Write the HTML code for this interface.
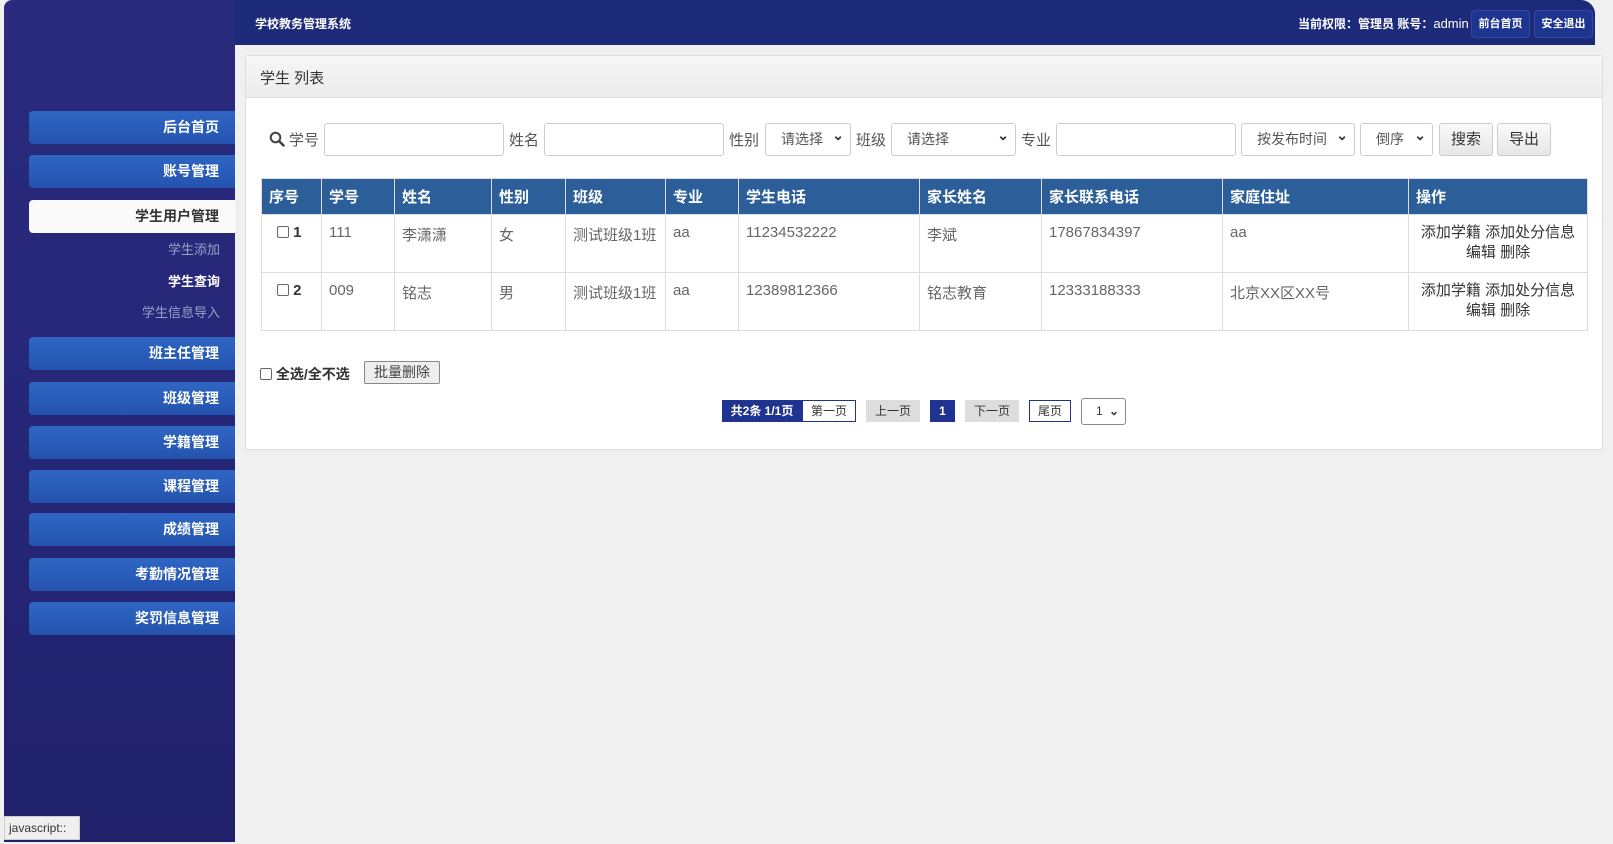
<!DOCTYPE html>
<html><head><meta charset="utf-8"><style>
*{box-sizing:border-box;margin:0;padding:0}
body{width:1613px;height:844px;overflow:hidden;background:#f0f0f0;font-family:"Liberation Sans","Noto Sans CJK SC",sans-serif;position:relative;font-size:14px;color:#555}
.a{position:absolute}
#side{left:4px;top:0;width:231px;height:842px;background:linear-gradient(180deg,#2a2b7e 0%,#262778 50%,#20216a 100%);border-radius:8px 0 0 0}
#head{left:234px;top:0;width:1361px;height:45px;background:#1d2a7a;border-radius:0 14px 0 0}
.mi{position:absolute;left:29px;width:206px;height:33px;background:linear-gradient(#2f66c4,#2453ae);border-radius:4px 0 0 4px;color:#fff;font-weight:bold;font-size:14px;text-align:right;padding-right:16px;line-height:33px}
.mi.w{background:#fafafa;color:#333}
.sub{position:absolute;right:1393px;font-size:13px;color:#9aa0c8}
#panel{left:245px;top:55px;width:1358px;height:395px;background:#fff;border:1px solid #ddd;border-radius:3px}
#ph{left:246px;top:56px;width:1356px;height:42px;background:linear-gradient(#f6f6f6,#ececec);border-bottom:1px solid #ddd;font-size:15px;color:#333;padding:11px 0 0 14px}
.in{position:absolute;top:123px;height:33px;border:1px solid #ccc;border-radius:3px;background:#fff}
.sel{position:absolute;top:123px;height:33px;border:1px solid #ccc;border-radius:3px;background:#fff;font-size:14px;color:#555;line-height:31px;padding-left:15px}
.sel:after{content:"⌄";position:absolute;right:6px;top:-4px;font-size:14px;color:#333;font-weight:bold}
.lb{position:absolute;top:129px;font-size:15px;color:#555}
.btn{position:absolute;top:123px;height:33px;border:1px solid #ccc;border-radius:3px;background:linear-gradient(#fafafa,#e6e6e6);font-size:15px;color:#333;text-align:center;line-height:31px}
table{position:absolute;left:261px;top:178px;border-collapse:collapse;width:1327px}
th{background:#2c5f99;color:#fff;text-align:left;font-size:15px;height:36px;padding-left:7px;border:1px solid #ddd}
td{height:58px;vertical-align:top;padding:9px 0 0 7px;border:1px solid #ddd;font-size:15px;color:#666}
td.op{text-align:center;color:#333;padding:8px 0 0;line-height:20px}
.pg{position:absolute;top:400px;height:22px;font-size:12px;line-height:22px;text-align:center;color:#333}
.cb{display:inline-block;width:12px;height:12px;border:1px solid #666;border-radius:2px;vertical-align:-1px;background:#fff}
.hb{position:absolute;top:10px;width:59px;height:28px;border:1px solid #3347a8;border-radius:4px;background:#1e3590;color:#fff;font-size:11px;font-weight:bold;text-align:center;line-height:26px}
</style></head><body>
<div class="a" id="side"></div>
<div class="a" id="head"></div>
<div class="a" style="left:255px;top:15px;color:#fff;font-size:12px;font-weight:bold">学校教务管理系统</div>
<div class="a" style="left:1298px;top:15px;color:#fff;font-size:12px;font-weight:bold">当前权限：管理员 账号：<span style="font-weight:normal;font-size:13px">admin</span></div>
<div class="hb" style="left:1471px">前台首页</div>
<div class="hb" style="left:1534px">安全退出</div>

<div class="mi" style="top:111px">后台首页</div>
<div class="mi" style="top:155px">账号管理</div>
<div class="mi w" style="top:200px">学生用户管理</div>
<div class="sub" style="top:239px">学生添加</div>
<div class="sub" style="top:271px;color:#fff;font-weight:bold">学生查询</div>
<div class="a" style="left:229px;top:274px;width:0;height:0;border:6px solid transparent;border-right-color:#f0f0f0"></div>
<div class="sub" style="top:302px">学生信息导入</div>
<div class="mi" style="top:337px">班主任管理</div>
<div class="mi" style="top:382px">班级管理</div>
<div class="mi" style="top:426px">学籍管理</div>
<div class="mi" style="top:470px">课程管理</div>
<div class="mi" style="top:513px">成绩管理</div>
<div class="mi" style="top:558px">考勤情况管理</div>
<div class="mi" style="top:602px">奖罚信息管理</div>
<div class="a" style="left:4px;top:816px;width:76px;height:24px;background:#f0f0f0;border:1px solid #ccc;font-size:12px;color:#333;padding:4px 0 0 4px">javascript::</div>

<div class="a" id="panel"></div>
<div class="a" id="ph">学生 列表</div>
<svg class="a" style="left:269px;top:131px" width="16" height="16" viewBox="0 0 16 16"><circle cx="6.5" cy="6.5" r="4.8" fill="none" stroke="#444" stroke-width="2"/><path d="M10 10l4.5 4.5" stroke="#444" stroke-width="2.6" stroke-linecap="round"/></svg>
<div class="lb" style="left:289px">学号</div><div class="in" style="left:324px;width:180px"></div>
<div class="lb" style="left:509px">姓名</div><div class="in" style="left:544px;width:180px"></div>
<div class="lb" style="left:729px">性别</div><div class="sel" style="left:765px;width:86px">请选择</div>
<div class="lb" style="left:856px">班级</div><div class="sel" style="left:891px;width:125px">请选择</div>
<div class="lb" style="left:1021px">专业</div><div class="in" style="left:1056px;width:180px"></div>
<div class="sel" style="left:1241px;width:114px">按发布时间</div>
<div class="sel" style="left:1360px;width:73px">倒序</div>
<div class="btn" style="left:1439px;width:54px">搜索</div>
<div class="btn" style="left:1497px;width:54px">导出</div>

<table>
<tr><th style="width:60px">序号</th><th style="width:73px">学号</th><th style="width:97px">姓名</th><th style="width:74px">性别</th><th style="width:100px">班级</th><th style="width:73px">专业</th><th style="width:181px">学生电话</th><th style="width:122px">家长姓名</th><th style="width:181px">家长联系电话</th><th style="width:186px">家庭住址</th><th>操作</th></tr>
<tr><td style="color:#333;font-weight:bold;padding-left:15px"><span class="cb"></span> 1</td><td>111</td><td>李潇潇</td><td>女</td><td>测试班级1班</td><td>aa</td><td>11234532222</td><td>李斌</td><td>17867834397</td><td>aa</td><td class="op">添加学籍 添加处分信息<br>编辑 删除</td></tr>
<tr><td style="color:#333;font-weight:bold;padding-left:15px"><span class="cb"></span> 2</td><td>009</td><td>铭志</td><td>男</td><td>测试班级1班</td><td>aa</td><td>12389812366</td><td>铭志教育</td><td>12333188333</td><td>北京XX区XX号</td><td class="op">添加学籍 添加处分信息<br>编辑 删除</td></tr>
</table>

<div class="a" style="left:260px;top:364px;font-size:14px;color:#333;font-weight:bold"><span class="cb"></span> 全选/全不选</div>
<div class="a" style="left:364px;top:361px;width:76px;height:23px;border:1px solid #888;border-radius:2px;background:#eee;font-size:14px;color:#444;text-align:center;line-height:21px">批量删除</div>

<div class="pg" style="left:722px;width:80px;background:#1f3391;color:#fff;font-weight:bold">共2条 1/1页</div>
<div class="pg" style="left:802px;width:54px;border:1px solid #1f3391;background:#fff;line-height:20px">第一页</div>
<div class="pg" style="left:866px;width:54px;background:#ddd">上一页</div>
<div class="pg" style="left:930px;width:25px;background:#1f3391;color:#fff;font-weight:bold">1</div>
<div class="pg" style="left:965px;width:54px;background:#ddd">下一页</div>
<div class="pg" style="left:1029px;width:42px;border:1px solid #1f3391;background:#fff;line-height:20px">尾页</div>
<div class="pg" style="left:1081px;top:398px;width:45px;height:27px;border:1px solid #888;border-radius:3px;background:#fff;line-height:25px;text-align:left;padding-left:14px">1 <span style="position:absolute;right:6px;font-weight:bold">⌄</span></div>
</body></html>
